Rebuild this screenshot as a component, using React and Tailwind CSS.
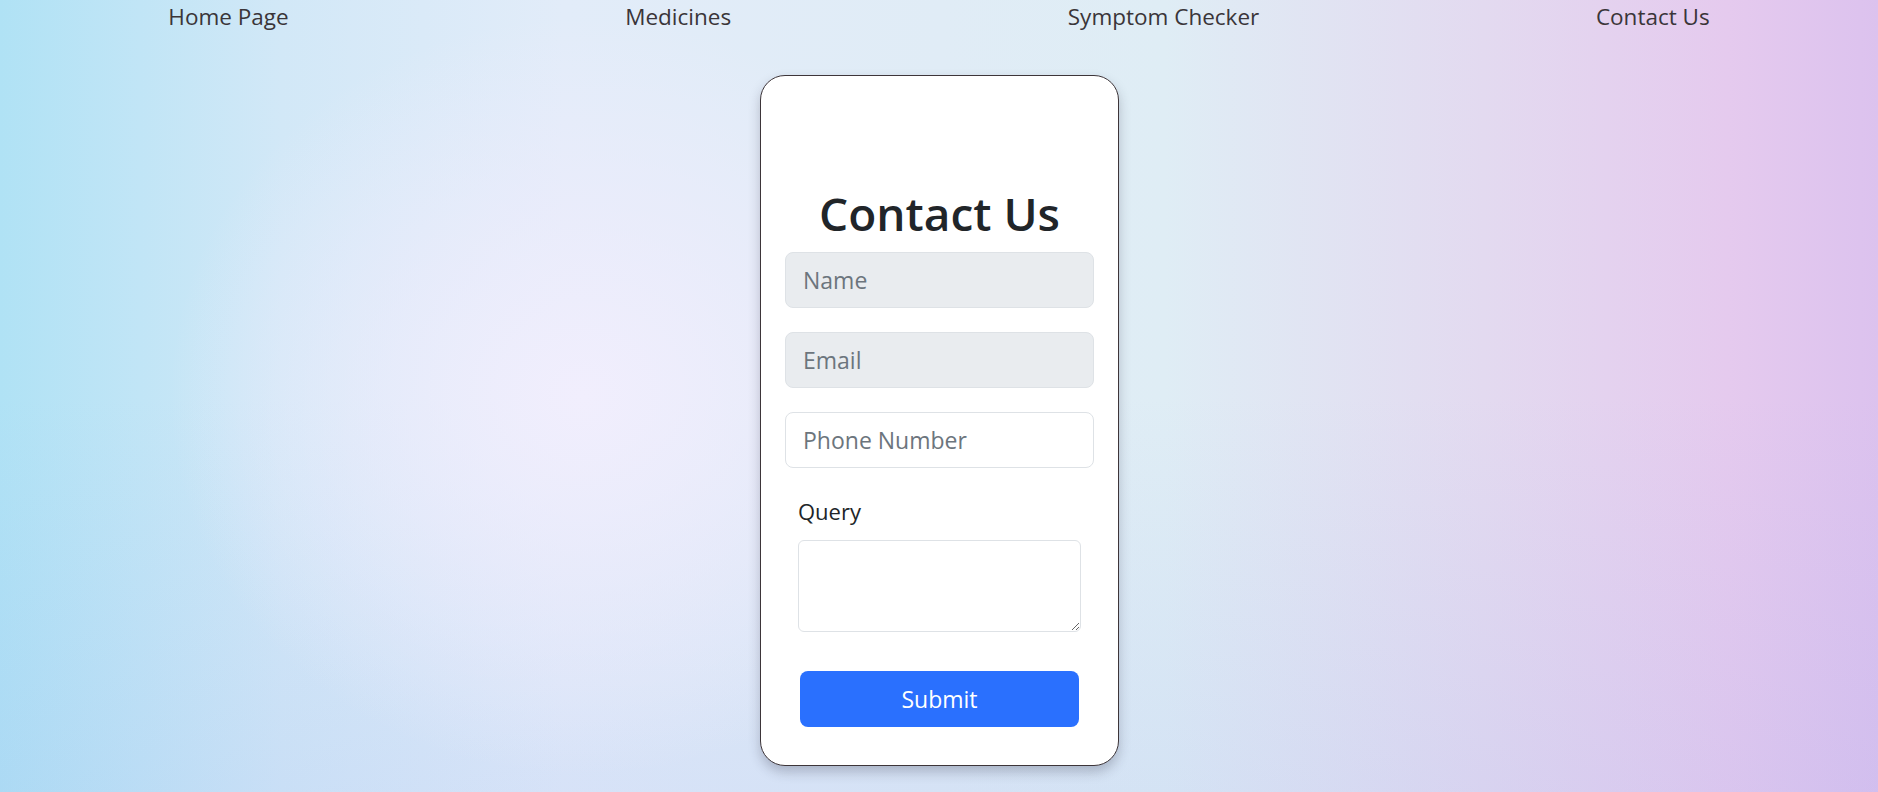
import React from "react";

const font = { fontFamily: '"Open Sans", "Noto Sans", Arial, sans-serif' };

export default function App() {
  return (
    <div
      className="min-h-[792px] w-full bg-[radial-gradient(ellipse_22%_48%_at_31%_50%,rgba(241,238,253,1)_0%,rgba(238,236,252,0.6)_50%,rgba(238,236,252,0)_100%),linear-gradient(to_bottom,rgba(255,255,255,0)_50%,rgba(150,170,240,0.15)_100%),linear-gradient(to_right,#b0e2f5_0%,#d2e8f7_15%,#e2ecf9_30%,#e0ecf6_50%,#dfedf5_62%,#e3daf0_79%,#e5caee_92%,#dcc2ee_100%)]"
      style={font}
    >
      <nav className="flex justify-around pt-[2px] text-[22.5px] leading-[30px] text-[#3a3539]">
        <a className="block">Home Page</a>
        <a className="block">Medicines</a>
        <a className="block">Symptom Checker</a>
        <a className="block">Contact Us</a>
      </nav>
      <div className="flex justify-center pt-[43px] pb-[24px]">
        <div className="ml-[1px] flex w-[359px] flex-col rounded-[25px] border border-[#3d3539] bg-white px-[24px] pt-[109px] pb-[38px] shadow-[0_6px_12px_rgba(40,40,60,0.25)]">
          <h1 className="mb-[10px] text-center text-[46px] font-semibold leading-[57px] text-[#212529]">
            Contact Us
          </h1>
          <div className="flex flex-col gap-[24px]">
            <input
              placeholder="Name"
              className="h-[56px] w-full rounded-[8px] border border-[#dee2e6] bg-[#e9ecef] px-[17px] text-[23px] text-[#212529] outline-none placeholder:text-[#6c757d]"
            />
            <input
              placeholder="Email"
              className="h-[56px] w-full rounded-[8px] border border-[#dee2e6] bg-[#e9ecef] px-[17px] text-[23px] text-[#212529] outline-none placeholder:text-[#6c757d]"
            />
            <input
              placeholder="Phone Number"
              className="h-[56px] w-full rounded-[8px] border border-[#dee2e6] bg-white px-[17px] text-[23px] text-[#212529] outline-none placeholder:text-[#6c757d]"
            />
          </div>
          <div className="mx-[13px] mt-[27px] flex flex-col">
            <label className="text-[22px] leading-[33px] text-[#212529]">Query</label>
            <textarea className="mt-[12px] h-[92px] w-full rounded-[6px] border border-[#dee2e6] bg-white outline-none" />
          </div>
          <button className="mx-[15px] mt-[39px] h-[56px] rounded-[8px] bg-[#2a70fe] text-[23px] text-white">
            Submit
          </button>
        </div>
      </div>
    </div>
  );
}
